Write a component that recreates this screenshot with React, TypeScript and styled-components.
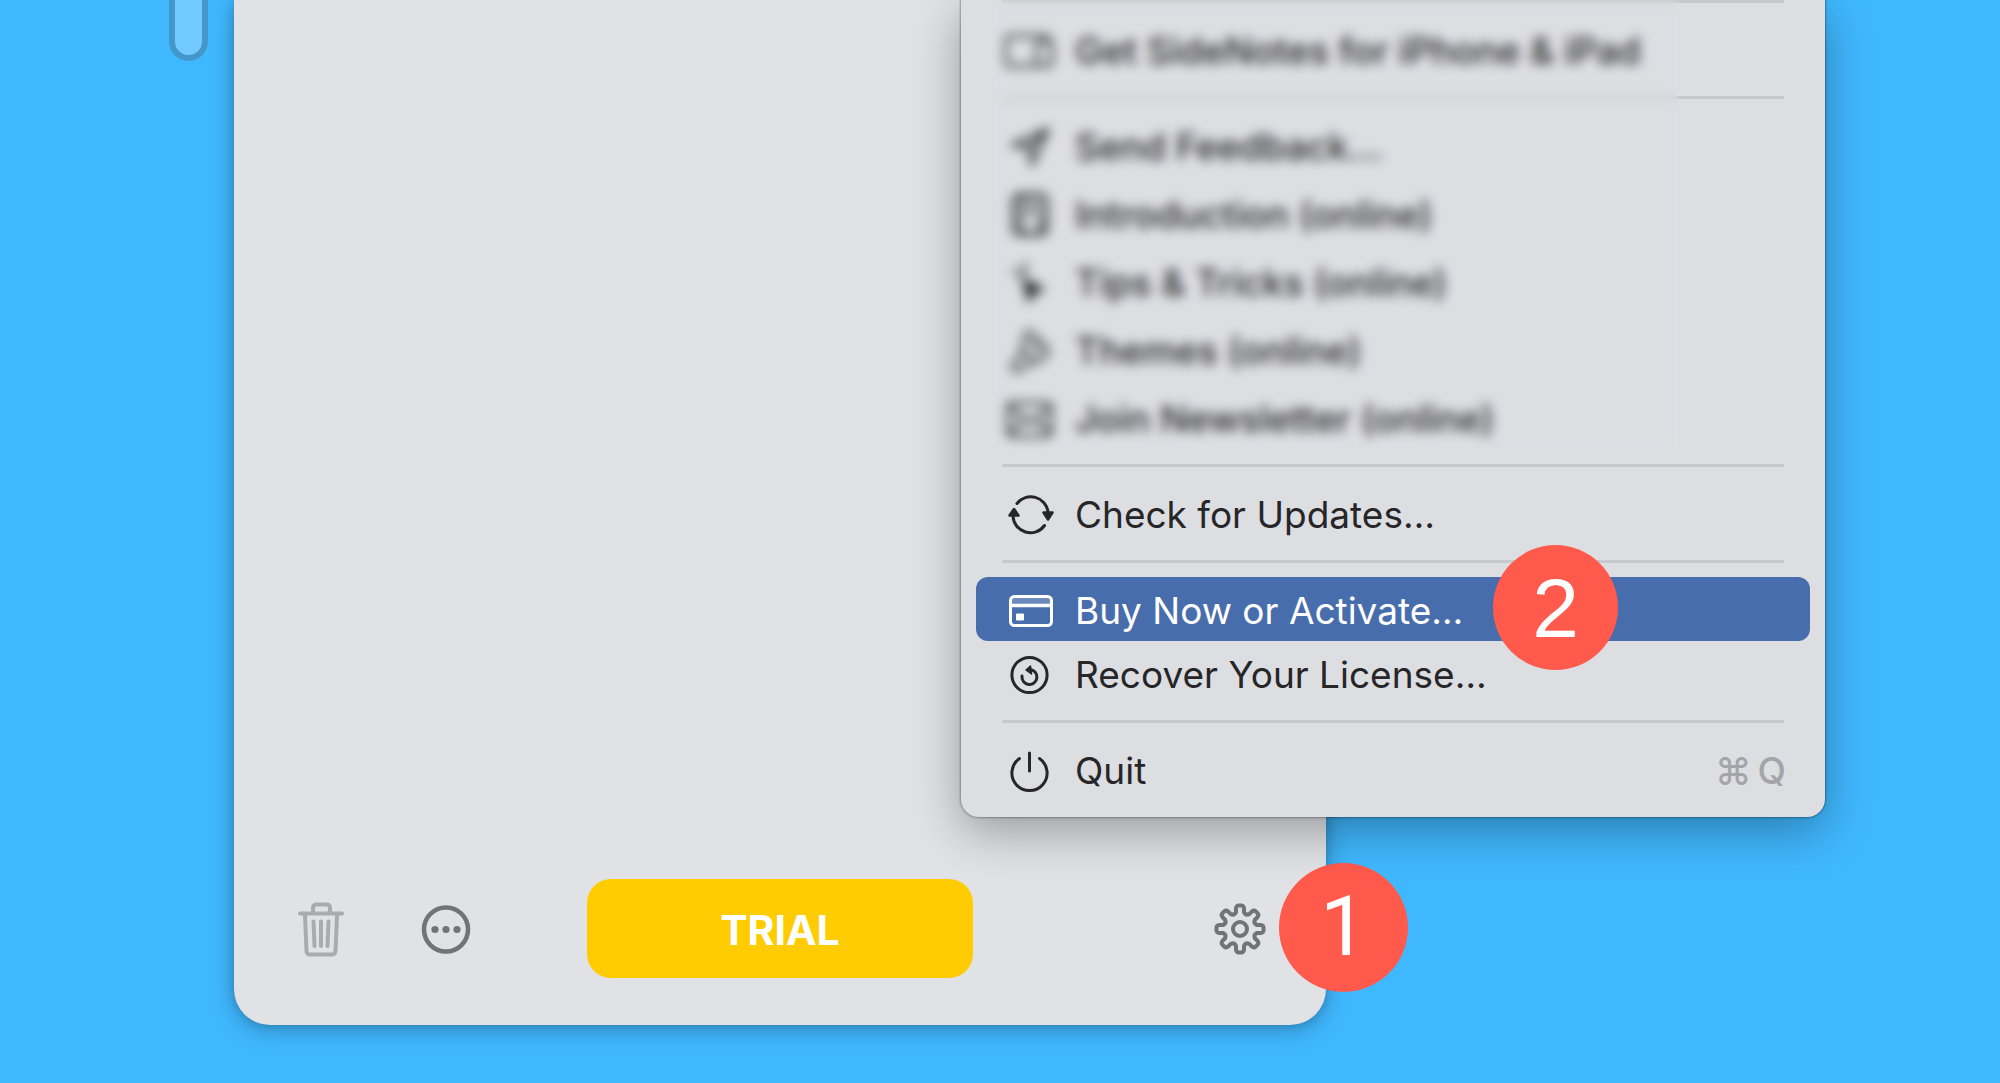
import React from "react";
import styled, { createGlobalStyle, css } from "styled-components";

const GlobalStyle = createGlobalStyle`
  *, *::before, *::after { box-sizing: border-box; }
  body {
    margin: 0;
    background: #40b8ff;
    font-family: Inter, "Liberation Sans", sans-serif;
    color: #262628;
  }
  button {
    margin: 0;
    border: 0;
    padding: 0;
    background: none;
    font: inherit;
    color: inherit;
    cursor: default;
  }
`;

const Desktop = styled.div`
  display: flex;
  align-items: stretch;
  gap: 26px;
  min-height: 100vh;
  padding: 0 674px 58px 169px;
  overflow: hidden;
`;

const SideHandle = styled.div`
  flex: none;
  align-self: flex-start;
  width: 39px;
  height: 61px;
  border: 6px solid #4697c9;
  border-top: 0;
  border-radius: 0 0 20px 20px;
  background: #72caff;
`;

const Window = styled.main`
  position: relative;
  flex: 1;
  display: flex;
  flex-direction: column;
  justify-content: flex-end;
  border-radius: 0 0 36px 36px;
  background: #e1e2e6;
  box-shadow: 0 4px 24px rgba(0, 0, 0, 0.28), 0 0 8px rgba(0, 0, 0, 0.16);
`;

const Toolbar = styled.footer`
  display: grid;
  grid-template-columns: 1fr 386px 1fr;
  align-items: center;
  padding: 0 60px 47px;
`;

const ToolGroup = styled.div<{ $end?: boolean }>`
  display: flex;
  gap: 74px;
  justify-content: ${(p) => (p.$end ? "flex-end" : "flex-start")};
`;

const ToolButton = styled.button<{ $muted?: boolean }>`
  position: relative;
  display: flex;
  width: 52px;
  height: 56px;
  align-items: center;
  justify-content: center;
  color: ${(p) => (p.$muted ? "#aaabaf" : "#727377")};
`;

const TrialButton = styled.button`
  height: 99px;
  padding-top: 2px;
  border-radius: 24px;
  background: #ffcc02;
  color: #fff;
  font-size: 41px;
  font-weight: 700;
`;

const Menu = styled.div`
  position: absolute;
  right: -499px;
  bottom: 208px;
  width: 864px;
  padding-bottom: 16px;
  border-radius: 0 0 18px 18px;
  background: #dddee2;
  box-shadow: 0 0 2px 1px rgba(0, 0, 0, 0.3), 0 14px 48px rgba(0, 0, 0, 0.32);
`;

const Group = styled.div<{ $gap?: number; $bold?: boolean }>`
  position: relative;
  display: flex;
  flex-direction: column;
  gap: ${(p) => p.$gap ?? 0}px;
  font-weight: ${(p) => (p.$bold ? 500 : 400)};
`;

const Rule = styled.hr`
  height: 3px;
  margin: 15px 41px 14px;
  border: 0;
  background: #c8c9cd;

  &:first-child {
    margin-top: 0;
  }
`;

const Frosted = styled.div`
  position: absolute;
  inset: 0 147px 0 24px;
  backdrop-filter: blur(6px);
  pointer-events: none;
`;

const Item = styled.button<{ $active?: boolean }>`
  position: relative;
  display: flex;
  align-items: center;
  gap: 21px;
  height: 64px;
  margin: 0 15px;
  padding: 3px 24px 0 30px;
  font-size: 37px;
  line-height: 48px;
  text-align: left;
  white-space: nowrap;
  ${(p) =>
    p.$active &&
    css`
      border-radius: 12px;
      background: #486dac;
      color: #fff;
    `}

  svg {
    flex: none;
  }
`;

const Shortcut = styled.kbd`
  display: flex;
  gap: 6px;
  margin-left: auto;
  font-family: inherit;
  font-weight: 500;
  color: #a4a5a9;
`;

const Step = styled.span<{ $size: number; $left: number; $face?: string }>`
  position: absolute;
  top: 50%;
  left: ${(p) => p.$left}px;
  display: flex;
  align-items: center;
  justify-content: center;
  width: ${(p) => p.$size}px;
  height: ${(p) => p.$size}px;
  margin-top: ${(p) => -Math.ceil(p.$size / 2) - 1}px;
  border-radius: 50%;
  background: #ff5a4c;
  color: #fff;
  font-family: ${(p) => p.$face ?? '"Liberation Sans"'}, Arial, sans-serif;
  font-size: 84px;
  font-weight: 400;
  line-height: 96px;
`;

const Icon = ({ children, size = 48 }: { children: React.ReactNode; size?: number }) => (
  <svg
    width={size}
    height={size}
    viewBox={`0 0 ${size} ${size}`}
    fill="none"
    stroke="currentColor"
    strokeWidth="3"
    strokeLinecap="round"
    strokeLinejoin="round"
    overflow="visible"
    aria-hidden="true"
  >
    {children}
  </svg>
);

const DevicesIcon = () => (
  <Icon>
    <path d="M29 39H4a4 4 0 0 1-4-4V13a4 4 0 0 1 4-4h35a4 4 0 0 1 4 3" />
    <rect x="31" y="14" width="15" height="25" rx="4" />
  </Icon>
);
const SendIcon = () => (
  <Icon>
    <path d="M42 6 6 22l17 3 3 17Z M42 6 23 25" fill="currentColor" fillOpacity="0.15" />
  </Icon>
);
const BookIcon = () => (
  <Icon>
    <rect x="8" y="4" width="32" height="39" rx="5" strokeWidth="4" />
    <path d="M16 6v36M22 13h11M22 21h11M34 28v14" />
  </Icon>
);
const CursorIcon = () => (
  <Icon>
    <path d="m18 21 19 9-9 3-5 9Z" fill="currentColor" />
    <path d="M19 4v7M8 12l5 4M19 11l-2 6" />
  </Icon>
);
const BrushIcon = () => (
  <Icon>
    <path d="M23 4 42 22c0 8-7 12-14 12l-14 9c-6 3-10-2-6-7l9-12c0-8 0-16 6-20ZM17 23l13 12M26 14l8 8" />
  </Icon>
);
const MailIcon = () => (
  <Icon>
    <rect x="2" y="8" width="43" height="33" rx="4" />
    <path d="m4 11 17 15c2 2 4 2 6 0l17-15M4 38l14-14M44 38 30 24" />
  </Icon>
);
const RefreshIcon = () => (
  <Icon>
    <path d="M11 12.500A17.400 17.400 0 0 1 42 21M38.500 34.500A17.400 17.400 0 0 1 7 25" />
    <path d="M37.500 21.500h9l-4.500 7ZM3.500 24.500h9L8 18Z" fill="currentColor" strokeWidth="2.500" />
  </Icon>
);
const CardIcon = () => (
  <Icon>
    <rect x="4.500" y="9.500" width="41" height="29" rx="4" />
    <path d="M5 11h40v7H5Z" fill="currentColor" fillOpacity="0.200" stroke="none" />
    <path d="M5 18.500h40" strokeWidth="3.500" />
    <rect x="10" y="26.500" width="8" height="7" rx="1" fill="currentColor" stroke="none" />
  </Icon>
);
const RecoverIcon = () => (
  <Icon>
    <circle cx="23.500" cy="24" r="17.600" />
    <path d="M16 25a7.500 7.500 0 1 0 8-6.500" />
    <path d="m24.500 15-4.500 4 5.500 4Z" fill="currentColor" strokeWidth="1.500" />
  </Icon>
);
const PowerIcon = () => (
  <Icon>
    <path d="M13.500 11.500a17.600 17.600 0 1 0 20 0M23.500 6v18" />
  </Icon>
);
const TrashIcon = () => (
  <Icon size={56}>
    <g strokeWidth="4">
      <path d="M8 12.500h42M21 12V7c0-2 1-3.500 3.500-3.500h10C37 3.500 38 5 38 7v5" />
      <path d="m13 14 1.500 36c.1 2.500 1.500 3.500 3.500 3.500h22c2 0 3.400-1 3.500-3.500L45 14" />
      <path d="m21.500 20.500 1 24.500M29 20.500V45M36.500 20.500l-1 24.500" />
    </g>
  </Icon>
);
const MoreIcon = () => (
  <Icon size={52}>
    <circle cx="26" cy="26.500" r="22" strokeWidth="4.500" />
    <g fill="currentColor" stroke="none">
      <circle cx="15" cy="26.500" r="3.600" />
      <circle cx="26" cy="26.500" r="3.600" />
      <circle cx="37" cy="26.500" r="3.600" />
    </g>
  </Icon>
);

const polar = (deg: number, r: number) => {
  const a = ((deg - 90) * Math.PI) / 180;
  return `${(26 + r * Math.cos(a)).toFixed(2)} ${(26 + r * Math.sin(a)).toFixed(2)}`;
};
const gearPath =
  `M${polar(-13, 17.5)}` +
  Array.from({ length: 8 }, (_, i) => {
    const a = i * 45;
    return (
      `L${polar(a - 11, 21)}Q${polar(a - 9, 23.6)} ${polar(a - 4, 23.6)}` +
      `L${polar(a + 4, 23.6)}Q${polar(a + 9, 23.6)} ${polar(a + 11, 21)}` +
      `L${polar(a + 13, 17.5)}Q${polar(a + 22.5, 14.5)} ${polar(a + 32, 17.5)}`
    );
  }).join("") +
  "Z";

const GearIcon = () => (
  <Icon size={52}>
    <path d={gearPath} strokeWidth="4" />
    <circle cx="26" cy="26" r="7" strokeWidth="4" />
  </Icon>
);

const helpItems = [
  { label: "Send Feedback…", icon: <SendIcon /> },
  { label: "Introduction (online)", icon: <BookIcon /> },
  { label: "Tips & Tricks (online)", icon: <CursorIcon /> },
  { label: "Themes (online)", icon: <BrushIcon /> },
  { label: "Join Newsletter (online)", icon: <MailIcon /> },
];

export default function App() {
  return (
    <>
      <GlobalStyle />
      <Desktop>
        <SideHandle />
        <Window>
          <Toolbar>
            <ToolGroup>
              <ToolButton type="button" $muted aria-label="Delete">
                <TrashIcon />
              </ToolButton>
              <ToolButton type="button" aria-label="More">
                <MoreIcon />
              </ToolButton>
            </ToolGroup>
            <TrialButton type="button">TRIAL</TrialButton>
            <ToolGroup $end>
              <ToolButton type="button" aria-label="Settings">
                <GearIcon />
                <Step $size={129} $left={65} $face="Roboto">1</Step>
              </ToolButton>
            </ToolGroup>
          </Toolbar>

          <Menu role="menu">
            <Group $bold>
              <Rule />
              <Item type="button" role="menuitem">
                <DevicesIcon />
                Get SideNotes for iPhone &amp; iPad
              </Item>
              <Rule />
              <Group $gap={4} $bold>
                {helpItems.map((item) => (
                  <Item key={item.label} type="button" role="menuitem">
                    {item.icon}
                    {item.label}
                  </Item>
                ))}
              </Group>
              <Frosted />
            </Group>
            <Rule />
            <Group>
              <Item type="button" role="menuitem">
                <RefreshIcon />
                Check for Updates…
              </Item>
            </Group>
            <Rule />
            <Group>
              <Item type="button" role="menuitem" $active>
                <CardIcon />
                Buy Now or Activate…
                <Step $size={125} $left={517}>2</Step>
              </Item>
              <Item type="button" role="menuitem">
                <RecoverIcon />
                Recover Your License…
              </Item>
            </Group>
            <Rule />
            <Group>
              <Item type="button" role="menuitem">
                <PowerIcon />
                Quit
                <Shortcut>
                  <span>⌘</span>
                  <span>Q</span>
                </Shortcut>
              </Item>
            </Group>
          </Menu>
        </Window>
      </Desktop>
    </>
  );
}
